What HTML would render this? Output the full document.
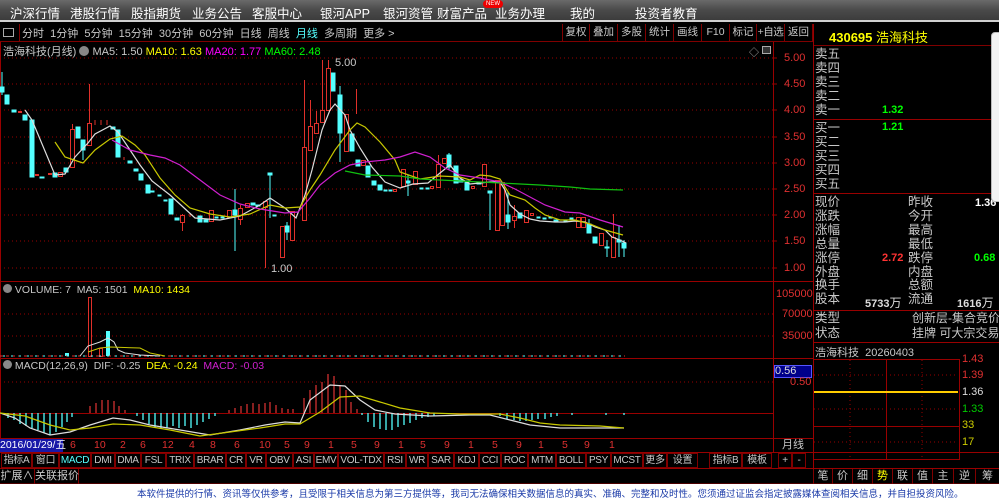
<!DOCTYPE html>
<html><head><meta charset="utf-8">
<style>
*{margin:0;padding:0;box-sizing:border-box}
body{width:999px;height:500px;overflow:hidden;background:#000;font-family:"Liberation Sans","Noto Sans CJK SC",sans-serif;position:relative;color:#c8c8c8}
.a{position:absolute;white-space:nowrap}
#nav{position:absolute;left:0;top:0;width:999px;height:22px;background:linear-gradient(#6a6a6a,#4a4a4a 50%,#3c3c3c);border-bottom:2px solid #d0d0d0}
#nav span{position:absolute;top:3px;color:#fff;font-size:12.5px}
.tb{position:absolute;top:25px;height:15px;font-size:11px;color:#c8c8c8;white-space:nowrap}
.btn{position:absolute;top:24px;height:17px;border-left:1px solid #800000;font-size:10.5px;color:#c8c8c8;text-align:center;line-height:17px;white-space:nowrap;overflow:hidden}
.rp{position:absolute;font-size:12.5px;color:#c8c8c8;line-height:14px}
.tab{position:absolute;top:453px;height:15px;border:1px solid #800000;font-size:10px;line-height:13px;text-align:center;color:#c8c8c8;white-space:nowrap;overflow:hidden;letter-spacing:-0.3px}
.bt{position:absolute;top:469px;height:15px;border-left:1px solid #800000;font-size:11px;line-height:15px;text-align:center;color:#c8c8c8;white-space:nowrap}
</style></head><body>
<div id="nav">
<span style="left:10px">沪深行情</span><span style="left:70px">港股行情</span><span style="left:131px">股指期货</span><span style="left:192px">业务公告</span><span style="left:252px">客服中心</span><span style="left:320px">银河APP</span><span style="left:383px">银河资管</span><span style="left:437px">财富产品</span><span style="left:495px">业务办理</span><span style="left:570px">我的</span><span style="left:635px">投资者教育</span>
<div class="a" style="left:483px;top:0;width:20px;height:8px;background:#e00;border-radius:4px;color:#fff;font-size:6px;line-height:8px;text-align:center">NEW</div>
</div>
<div class="a" style="left:3px;top:28px;width:11px;height:9px;border:1px solid #aaa"></div>
<div class="a" style="left:19px;top:24px;width:1px;height:17px;background:#800000"></div>
<div class="tb" style="left:22px">分时 &nbsp;1分钟 &nbsp;5分钟 &nbsp;15分钟 &nbsp;30分钟 &nbsp;60分钟 &nbsp;日线 &nbsp;周线 &nbsp;<span style="color:#5ff">月线</span> &nbsp;多周期 &nbsp;更多 &gt;</div>
<div class="btn" style="left:562px;width:27px">复权</div><div class="btn" style="left:589px;width:28px">叠加</div><div class="btn" style="left:617px;width:28px">多股</div><div class="btn" style="left:645px;width:28px">统计</div><div class="btn" style="left:673px;width:28px">画线</div><div class="btn" style="left:701px;width:28px">F10</div><div class="btn" style="left:729px;width:27px">标记</div><div class="btn" style="left:756px;width:28px;letter-spacing:-0.5px">+自选</div><div class="btn" style="left:784px;width:29px;border-right:1px solid #800000">返回</div>
<div class="a" style="left:829px;top:27px;color:#ff0;font-size:13px;font-weight:bold">430695 <span style="font-weight:normal">浩海科技</span></div>
<div class="a" style="left:0;top:41px;width:813px;height:1px;background:#800000"></div>
<div class="a" style="left:813px;top:45px;width:186px;height:1px;background:#800000"></div>
<div class="a" style="left:3px;top:43px;font-size:11px">浩海科技(月线) <span style="display:inline-block;width:10px;height:10px;border-radius:5px;background:#888;vertical-align:-1px"></span> MA5: 1.50 <span style="color:#ff0">MA10: 1.63</span> <span style="color:#f0f">MA20: 1.77</span> <span style="color:#0f0">MA60: 2.48</span></div>
<div class="a" style="left:749px;top:44px;font-size:10px;color:#aaa">◇</div><div class="a" style="left:762px;top:46px;width:9px;height:8px;border:1px solid #aaa;background:#333"></div>

<svg class="a" style="left:0;top:0" width="999" height="500">
<g stroke="#900" stroke-dasharray="1,3" stroke-width="1">
<line x1="0" y1="58" x2="773" y2="58"/><line x1="0" y1="84" x2="773" y2="84"/><line x1="0" y1="110" x2="773" y2="110"/><line x1="0" y1="137" x2="773" y2="137"/><line x1="0" y1="163" x2="773" y2="163"/><line x1="0" y1="189" x2="773" y2="189"/><line x1="0" y1="215" x2="773" y2="215"/><line x1="0" y1="241" x2="773" y2="241"/><line x1="0" y1="268" x2="773" y2="268"/>
<line x1="0" y1="314" x2="773" y2="314"/><line x1="0" y1="336" x2="773" y2="336"/><line x1="0" y1="382" x2="773" y2="382"/>
<line x1="814" y1="375" x2="958" y2="375"/><line x1="814" y1="409" x2="958" y2="409"/><line x1="814" y1="442" x2="958" y2="442"/><line x1="850" y1="360" x2="850" y2="460"/><line x1="922" y1="360" x2="922" y2="460"/>
</g>
<g stroke="#900" stroke-width="1">
<line x1="0.5" y1="42" x2="0.5" y2="452"/>
<line x1="773.5" y1="42" x2="773.5" y2="452"/><line x1="813.5" y1="24" x2="813.5" y2="468"/>
<line x1="0" y1="281.5" x2="813" y2="281.5"/><line x1="0" y1="358.5" x2="813" y2="358.5"/>
<line x1="0" y1="413.5" x2="773" y2="413.5"/>
<line x1="0" y1="438.5" x2="813" y2="438.5"/><line x1="0" y1="452.5" x2="999" y2="452.5"/>
<line x1="0" y1="468.5" x2="999" y2="468.5"/><line x1="0" y1="484" x2="999" y2="484"/>
<line x1="813" y1="119.5" x2="999" y2="119.5"/><line x1="813" y1="193.5" x2="999" y2="193.5"/><line x1="813" y1="310.5" x2="999" y2="310.5"/><line x1="813" y1="342.5" x2="999" y2="342.5"/>
<rect x="813.5" y="359.5" width="146" height="100" fill="none"/>
<line x1="886.5" y1="360" x2="886.5" y2="460"/><line x1="814" y1="426.5" x2="960" y2="426.5"/>
<line x1="773" y1="58" x2="777" y2="58"/><line x1="773" y1="84" x2="777" y2="84"/><line x1="773" y1="110" x2="777" y2="110"/><line x1="773" y1="137" x2="777" y2="137"/><line x1="773" y1="163" x2="777" y2="163"/><line x1="773" y1="189" x2="777" y2="189"/><line x1="773" y1="215" x2="777" y2="215"/><line x1="773" y1="241" x2="777" y2="241"/><line x1="773" y1="268" x2="777" y2="268"/>
</g>
<line x1="814" y1="392" x2="958" y2="392" stroke="#fc0" stroke-width="2"/>
<g fill="#54ffff" stroke="#54ffff" stroke-width="1">
<line x1="2" y1="72" x2="2" y2="95"/><rect x="0" y="87" width="4" height="5"/>
<rect x="5" y="95" width="4" height="9"/><rect x="12" y="110" width="4" height="2"/><rect x="23" y="115" width="4" height="5"/><rect x="30" y="120" width="4" height="57"/><rect x="40" y="177" width="4" height="1"/><rect x="53" y="173" width="4" height="4"/><rect x="64" y="168" width="4" height="4"/><rect x="76" y="127" width="4" height="11"/><line x1="83" y1="140" x2="83" y2="160"/><rect x="81" y="140" width="4" height="10"/>
<rect x="111" y="127" width="4" height="2"/><rect x="116" y="130" width="4" height="27"/><rect x="128" y="161" width="4" height="2"/><rect x="134" y="169" width="4" height="2"/><rect x="139" y="174" width="4" height="6"/><rect x="146" y="185" width="4" height="8"/><rect x="151" y="191" width="3" height="1"/><rect x="158" y="195" width="3" height="1"/><rect x="164" y="200" width="3" height="1"/><rect x="169" y="199" width="4" height="15"/><rect x="175" y="218" width="4" height="2"/><rect x="198" y="216" width="4" height="6"/><rect x="204" y="220" width="4" height="2"/><rect x="215" y="217" width="3" height="1"/><rect x="221" y="217" width="3" height="1"/>
<line x1="235" y1="189" x2="235" y2="251"/><rect x="233" y="210" width="4" height="5"/><rect x="251" y="203" width="4" height="2"/><rect x="256" y="205" width="4" height="1"/>
<line x1="270" y1="174" x2="270" y2="218"/><rect x="268" y="173" width="4" height="2"/><rect x="273" y="215" width="3" height="1"/><line x1="287" y1="222" x2="287" y2="240"/><rect x="285" y="226" width="4" height="6"/>
<rect x="331" y="73" width="4" height="18"/><line x1="340" y1="86" x2="340" y2="162"/><rect x="338" y="95" width="4" height="38"/><rect x="350" y="134" width="4" height="17"/><rect x="356" y="160" width="4" height="6"/><rect x="366" y="166" width="4" height="11"/><rect x="372" y="181" width="4" height="4"/><rect x="378" y="185" width="4" height="5"/><rect x="384" y="190" width="3" height="1"/><rect x="389" y="190" width="3" height="1"/>
<line x1="408" y1="175" x2="408" y2="196"/><rect x="406" y="181" width="4" height="2"/><rect x="420" y="188" width="3" height="1"/><rect x="426" y="188" width="3" height="1"/>
<line x1="449" y1="153" x2="449" y2="170"/><rect x="447" y="155" width="4" height="12"/><rect x="454" y="166" width="4" height="17"/><rect x="459" y="180" width="4" height="2"/><rect x="465" y="181" width="4" height="9"/><rect x="477" y="182" width="4" height="2"/>
<line x1="490" y1="191" x2="490" y2="230"/><rect x="488" y="191" width="4" height="2"/><line x1="508" y1="192" x2="508" y2="229"/><rect x="506" y="215" width="4" height="7"/><rect x="518" y="213" width="4" height="5"/><rect x="537" y="217" width="3" height="1"/><rect x="543" y="218" width="3" height="1"/><rect x="549" y="217" width="3" height="1"/><rect x="554" y="220" width="4" height="2"/><rect x="564" y="221" width="3" height="1"/><rect x="570" y="218" width="3" height="1"/>
<line x1="589" y1="219" x2="589" y2="233"/><rect x="587" y="224" width="4" height="9"/><rect x="593" y="237" width="4" height="6"/><line x1="607" y1="240" x2="607" y2="257"/><rect x="605" y="247" width="4" height="1"/><line x1="619" y1="225" x2="619" y2="257"/><rect x="617" y="240" width="4" height="2"/><line x1="624" y1="240" x2="624" y2="257"/><rect x="622" y="243" width="4" height="5"/>
</g>
<g fill="#000" stroke="#e0302a" stroke-width="1">
<rect x="18.5" y="111.5" width="3" height="1"/><rect x="35.5" y="174.5" width="3" height="1"/><rect x="48.5" y="173.5" width="3" height="1"/><rect x="58.5" y="172.5" width="4" height="4"/>
<line x1="72.5" y1="124" x2="72.5" y2="129"/><rect x="70.5" y="129.5" width="4" height="38"/>
<line x1="89.5" y1="84" x2="89.5" y2="123"/><rect x="87.5" y="123.5" width="4" height="22"/>
<line x1="95" y1="120" x2="95" y2="125"/><line x1="101" y1="120" x2="101" y2="125"/><line x1="107" y1="120" x2="107" y2="125"/><line x1="124" y1="157" x2="124" y2="160"/>
<line x1="182.5" y1="214" x2="182.5" y2="231"/><rect x="180.5" y="215.5" width="4" height="7"/><line x1="190" y1="214" x2="190" y2="217"/>
<rect x="209.5" y="210.5" width="4" height="11"/><rect x="227.5" y="210.5" width="4" height="7"/><line x1="240.5" y1="205" x2="240.5" y2="225"/><rect x="238.5" y="208.5" width="4" height="11"/><rect x="245.5" y="203.5" width="4" height="4"/>
<line x1="265.5" y1="201" x2="265.5" y2="268"/><rect x="263.5" y="201.5" width="4" height="6"/>
<rect x="280.5" y="226.5" width="4" height="31"/><rect x="290.5" y="211.5" width="4" height="29"/>
<line x1="304.5" y1="80" x2="304.5" y2="147"/><rect x="302.5" y="147.5" width="4" height="73"/>
<line x1="310.5" y1="100" x2="310.5" y2="126"/><rect x="308.5" y="126.5" width="4" height="24"/>
<line x1="316.5" y1="111" x2="316.5" y2="123"/><rect x="314.5" y="123.5" width="4" height="10"/>
<line x1="322.5" y1="60" x2="322.5" y2="110"/><rect x="320.5" y="110.5" width="4" height="12"/>
<line x1="328.5" y1="60" x2="328.5" y2="68"/><rect x="326.5" y="68.5" width="4" height="42"/>
<line x1="356.5" y1="89" x2="356.5" y2="114"/><rect x="344.5" y="114.5" width="4" height="37"/>
<rect x="361.5" y="160.5" width="4" height="5"/><rect x="393.5" y="189.5" width="3" height="2"/>
<rect x="401.5" y="169.5" width="4" height="17"/><rect x="413.5" y="171.5" width="4" height="13"/><rect x="430.5" y="186.5" width="3" height="2"/>
<line x1="438.5" y1="155" x2="438.5" y2="164"/><rect x="436.5" y="164.5" width="4" height="23"/><rect x="442.5" y="158.5" width="4" height="5"/><rect x="471.5" y="186.5" width="3" height="2"/>
<rect x="482.5" y="164.5" width="4" height="22"/><rect x="495.5" y="180.5" width="4" height="50"/><line x1="502.5" y1="194" x2="502.5" y2="225"/><rect x="500.5" y="182.5" width="4" height="43"/>
<line x1="514.5" y1="205" x2="514.5" y2="228"/><rect x="512.5" y="216.5" width="4" height="4"/><rect x="524.5" y="210.5" width="4" height="12"/><rect x="530.5" y="213.5" width="3" height="2"/>
<rect x="576.5" y="217.5" width="4" height="10"/><rect x="581.5" y="217.5" width="4" height="10"/><rect x="599.5" y="233.5" width="4" height="12"/>
<line x1="613.5" y1="214" x2="613.5" y2="237"/><rect x="611.5" y="237.5" width="4" height="20"/>
</g>
<g fill="none" stroke-width="1.2">
<polyline stroke="#ddd" points="25,110 32,120 55,175 65,174 75,157 88,143 95,134 110,126 118,132 130,150 140,165 152,181 170,195 195,218 220,220 240,216 260,205 270,198 285,208 296,218 305,195 312,170 322,130 330,110 335,104 345,115 350,130 360,148 372,167 385,182 400,188 413,184 428,183 440,173 450,165 460,178 470,184 480,183 490,182 500,182 505,190 510,205 520,214 530,219 540,221 555,222 565,222 575,221 585,222 595,227 605,230 612,237 620,240 626,243"/>
<polyline stroke="#c8c800" points="55,142 65,157 83,163 95,150 110,139 122,136 135,145 145,155 160,178 175,195 190,208 210,214 230,217 250,214 270,205 285,208 300,207 310,190 320,175 335,150 350,130 357,123 365,127 380,142 395,160 400,172 420,179 440,176 460,177 470,180 480,175 490,176 500,179 510,195 525,200 535,208 545,215 560,220 575,220 590,224 605,230 623,235"/>
<polyline stroke="#d020d0" points="112,140 130,150 150,155 165,158 180,165 200,180 220,195 240,204 260,209 285,213 298,212 310,198 320,185 335,173 350,165 365,162 385,160 400,157 415,152 430,157 445,168 460,175 480,178 500,182 515,189 530,197 545,205 565,212 580,213 600,220 623,227"/>
<polyline stroke="#10c010" points="345,171 365,175 400,176 420,179 460,181 500,183 540,185 570,187 590,189 623,190"/>
</g>
<text x="335" y="66" fill="#c8c8c8" font-size="11" font-family="Liberation Sans">5.00</text><text x="271" y="272" fill="#c8c8c8" font-size="11" font-family="Liberation Sans">1.00</text>
<g stroke-width="1" fill="none">
<rect x="88.5" y="297.5" width="3" height="59" stroke="#e0302a"/><rect x="99.5" y="348.5" width="3" height="8" stroke="#e0302a"/>
<rect x="106" y="331" width="4" height="25" fill="#54ffff"/><rect x="65" y="353" width="4" height="3" fill="#54ffff"/>
<line x1="0" y1="356" x2="625" y2="356" stroke="#e0302a" stroke-dasharray="3,3"/><line x1="3" y1="356" x2="625" y2="356" stroke="#54ffff" stroke-dasharray="2,6"/>
<polyline stroke="#ddd" points="80,356 88,346 100,342 108,338 114,342 118,350 125,353 140,355 160,356"/>
<polyline stroke="#c8c800" points="88,352 100,348 110,347 140,348 150,353 165,356"/>
</g>
<g stroke="#54ffff" stroke-width="1.3">
<line x1="8" y1="413" x2="8" y2="418"/><line x1="14" y1="413" x2="14" y2="420"/><line x1="20" y1="413" x2="20" y2="424"/><line x1="26" y1="413" x2="26" y2="426"/><line x1="32" y1="413" x2="32" y2="428"/><line x1="38" y1="413" x2="38" y2="430"/><line x1="44" y1="413" x2="44" y2="433"/><line x1="50" y1="413" x2="50" y2="435"/><line x1="56" y1="413" x2="56" y2="432"/><line x1="62" y1="413" x2="62" y2="427"/><line x1="67" y1="413" x2="67" y2="422"/><line x1="72" y1="413" x2="72" y2="417"/>
<line x1="137" y1="413" x2="137" y2="416"/><line x1="143" y1="413" x2="143" y2="420"/><line x1="149" y1="413" x2="149" y2="424"/><line x1="155" y1="413" x2="155" y2="428"/><line x1="161" y1="413" x2="161" y2="428"/><line x1="167" y1="413" x2="167" y2="428"/><line x1="173" y1="413" x2="173" y2="426"/><line x1="179" y1="413" x2="179" y2="428"/><line x1="185" y1="413" x2="185" y2="426"/><line x1="191" y1="413" x2="191" y2="428"/><line x1="197" y1="413" x2="197" y2="425"/><line x1="203" y1="413" x2="203" y2="422"/><line x1="209" y1="413" x2="209" y2="419"/><line x1="215" y1="413" x2="215" y2="416"/>
<line x1="362" y1="413" x2="362" y2="415"/><line x1="368" y1="413" x2="368" y2="422"/><line x1="374" y1="413" x2="374" y2="427"/><line x1="380" y1="413" x2="380" y2="429"/><line x1="386" y1="413" x2="386" y2="430"/><line x1="392" y1="413" x2="392" y2="430"/><line x1="398" y1="413" x2="398" y2="427"/><line x1="404" y1="413" x2="404" y2="425"/><line x1="410" y1="413" x2="410" y2="423"/><line x1="416" y1="413" x2="416" y2="420"/><line x1="422" y1="413" x2="422" y2="418"/><line x1="428" y1="413" x2="428" y2="417"/><line x1="434" y1="413" x2="434" y2="416"/>
<line x1="500" y1="413" x2="500" y2="416"/><line x1="507" y1="413" x2="507" y2="419"/><line x1="514" y1="413" x2="514" y2="420"/><line x1="520" y1="413" x2="520" y2="421"/><line x1="526" y1="413" x2="526" y2="421"/><line x1="532" y1="413" x2="532" y2="420"/><line x1="538" y1="413" x2="538" y2="419"/><line x1="545" y1="413" x2="545" y2="419"/><line x1="551" y1="413" x2="551" y2="417"/><line x1="557" y1="413" x2="557" y2="416"/><line x1="572" y1="413" x2="572" y2="415"/><line x1="606" y1="413" x2="606" y2="415"/><line x1="624" y1="413" x2="624" y2="415"/>
</g>
<g stroke="#d03030" stroke-width="1.3">
<line x1="90" y1="413" x2="90" y2="406"/><line x1="96" y1="413" x2="96" y2="403"/><line x1="102" y1="413" x2="102" y2="400"/><line x1="108" y1="413" x2="108" y2="400"/><line x1="114" y1="413" x2="114" y2="401"/><line x1="119" y1="413" x2="119" y2="406"/><line x1="125" y1="413" x2="125" y2="410"/>
<line x1="229" y1="413" x2="229" y2="410"/><line x1="235" y1="413" x2="235" y2="408"/><line x1="241" y1="413" x2="241" y2="406"/><line x1="247" y1="413" x2="247" y2="404"/><line x1="253" y1="413" x2="253" y2="403"/><line x1="259" y1="413" x2="259" y2="404"/><line x1="265" y1="413" x2="265" y2="403"/><line x1="270" y1="413" x2="270" y2="402"/><line x1="276" y1="413" x2="276" y2="405"/><line x1="282" y1="413" x2="282" y2="408"/><line x1="288" y1="413" x2="288" y2="409"/><line x1="293" y1="413" x2="293" y2="409"/>
<line x1="304" y1="413" x2="304" y2="398"/><line x1="310" y1="413" x2="310" y2="390"/><line x1="316" y1="413" x2="316" y2="385"/><line x1="322" y1="413" x2="322" y2="382"/><line x1="328" y1="413" x2="328" y2="374"/><line x1="334" y1="413" x2="334" y2="376"/><line x1="340" y1="413" x2="340" y2="385"/><line x1="346" y1="413" x2="346" y2="390"/><line x1="351" y1="413" x2="351" y2="402"/><line x1="357" y1="413" x2="357" y2="409"/>
</g>
<g fill="none" stroke-width="1.2">
<polyline stroke="#ddd" points="0,413 15,418 30,428 50,435 70,432 90,425 113,418 130,420 150,425 180,430 210,435 240,430 265,425 285,422 300,423 310,400 330,385 345,386 360,400 375,410 395,414 430,416 470,415 490,415 510,420 530,425 560,428 600,428 624,428"/>
<polyline stroke="#c8c800" points="0,413 25,416 50,425 70,430 90,428 113,424 140,425 170,430 200,436 230,432 260,428 285,424 300,424 320,412 340,397 360,396 380,402 400,408 430,413 460,414 500,414 520,418 540,423 560,425 600,426 624,428"/>
</g>
</svg>

<div class="a" style="left:784px;top:52px;font-size:11px;color:#e03030">5.00</div>
<div class="a" style="left:784px;top:78px;font-size:11px;color:#e03030">4.50</div>
<div class="a" style="left:784px;top:104px;font-size:11px;color:#e03030">4.00</div>
<div class="a" style="left:784px;top:131px;font-size:11px;color:#e03030">3.50</div>
<div class="a" style="left:784px;top:157px;font-size:11px;color:#e03030">3.00</div>
<div class="a" style="left:784px;top:183px;font-size:11px;color:#e03030">2.50</div>
<div class="a" style="left:784px;top:209px;font-size:11px;color:#e03030">2.00</div>
<div class="a" style="left:784px;top:235px;font-size:11px;color:#e03030">1.50</div>
<div class="a" style="left:784px;top:262px;font-size:11px;color:#e03030">1.00</div>
<div class="a" style="left:776px;top:288px;font-size:11px;color:#e03030">105000</div>
<div class="a" style="left:782px;top:308px;font-size:11px;color:#e03030">70000</div>
<div class="a" style="left:782px;top:330px;font-size:11px;color:#e03030">35000</div>
<div class="a" style="left:774px;top:365px;width:38px;height:13px;background:#00008a;border:1px solid #55f;color:#ddd;font-size:11px;line-height:11px">0.56</div>
<div class="a" style="left:790px;top:376px;font-size:11px;color:#e03030">0.50</div>

<div class="a" style="left:3px;top:284px;font-size:10.5px"><span style="display:inline-block;width:9px;height:9px;border-radius:5px;background:#888"></span> VOLUME: 7 &nbsp;MA5: 1501 &nbsp;<span style="color:#ff0">MA10: 1434</span></div>
<div class="a" style="left:3px;top:360px;font-size:10.5px"><span style="display:inline-block;width:9px;height:9px;border-radius:5px;background:#888"></span> MACD(12,26,9) &nbsp;DIF: -0.25 &nbsp;<span style="color:#ff0">DEA: -0.24</span> &nbsp;<span style="color:#d020d0">MACD: -0.03</span></div>

<div class="a" style="left:0;top:439px;width:63px;height:13px;background:#1818a8;color:#fff;font-size:10.5px;line-height:13px">2016/01/29/五</div>
<div class="a" style="left:70px;top:439px;font-size:10.5px;color:#e03030;line-height:13px">
<span style="position:absolute;left:0">6</span><span style="position:absolute;left:24px">10</span><span style="position:absolute;left:50px">2</span><span style="position:absolute;left:70px">6</span><span style="position:absolute;left:92px">12</span><span style="position:absolute;left:119px">4</span><span style="position:absolute;left:140px">8</span><span style="position:absolute;left:164px">6</span><span style="position:absolute;left:189px">10</span><span style="position:absolute;left:214px">5</span><span style="position:absolute;left:234px">9</span><span style="position:absolute;left:258px">1</span><span style="position:absolute;left:281px">5</span><span style="position:absolute;left:304px">9</span><span style="position:absolute;left:328px">1</span><span style="position:absolute;left:350px">5</span><span style="position:absolute;left:374px">9</span><span style="position:absolute;left:398px">1</span><span style="position:absolute;left:422px">5</span><span style="position:absolute;left:446px">9</span><span style="position:absolute;left:468px">1</span><span style="position:absolute;left:492px">5</span><span style="position:absolute;left:514px">9</span><span style="position:absolute;left:539px">1</span></div>
<div class="a" style="left:782px;top:439px;font-size:11px;line-height:13px">月线</div>

<div class="tab" style="left:1px;width:31px">指标A</div><div class="tab" style="left:32px;width:27px">窗口</div><div class="tab" style="left:59px;width:32px;color:#5ff">MACD</div><div class="tab" style="left:91px;width:24px">DMI</div><div class="tab" style="left:115px;width:26px">DMA</div><div class="tab" style="left:141px;width:25px">FSL</div><div class="tab" style="left:166px;width:28px">TRIX</div><div class="tab" style="left:194px;width:32px">BRAR</div><div class="tab" style="left:226px;width:20px">CR</div><div class="tab" style="left:246px;width:20px">VR</div><div class="tab" style="left:266px;width:27px">OBV</div><div class="tab" style="left:293px;width:21px">ASI</div><div class="tab" style="left:314px;width:24px">EMV</div><div class="tab" style="left:338px;width:46px">VOL-TDX</div><div class="tab" style="left:384px;width:22px">RSI</div><div class="tab" style="left:406px;width:22px">WR</div><div class="tab" style="left:428px;width:26px">SAR</div><div class="tab" style="left:454px;width:25px">KDJ</div><div class="tab" style="left:479px;width:22px">CCI</div><div class="tab" style="left:501px;width:27px">ROC</div><div class="tab" style="left:528px;width:28px">MTM</div><div class="tab" style="left:556px;width:30px">BOLL</div><div class="tab" style="left:586px;width:25px">PSY</div><div class="tab" style="left:611px;width:32px">MCST</div><div class="tab" style="left:643px;width:24px">更多</div><div class="tab" style="left:667px;width:31px">设置</div><div class="tab" style="left:709px;width:33px">指标B</div><div class="tab" style="left:742px;width:30px">模板</div><div class="tab" style="left:778px;width:14px">+</div><div class="tab" style="left:792px;width:14px">-</div>
<div class="bt" style="left:0;width:34px;border-left:none">扩展∧</div><div class="bt" style="left:34px;width:45px;border-right:1px solid #800000">关联报价</div>
<div class="bt" style="left:813px;width:19px">笔</div><div class="bt" style="left:832px;width:20px">价</div><div class="bt" style="left:852px;width:20px">细</div><div class="bt" style="left:872px;width:20px;color:#ff0">势</div><div class="bt" style="left:892px;width:20px">联</div><div class="bt" style="left:912px;width:20px">值</div><div class="bt" style="left:932px;width:21px">主</div><div class="bt" style="left:953px;width:22px">逆</div><div class="bt" style="left:975px;width:24px">筹</div>

<div class="rp" style="left:815px;top:47px">卖五<br>卖四<br>卖三<br>卖二<br>卖一</div>
<div class="a" style="left:882px;top:104px;font-size:11px;color:#0f0;font-weight:bold">1.32</div>
<div class="rp" style="left:815px;top:121px">买一<br>买二<br>买三<br>买四<br>买五</div>
<div class="a" style="left:882px;top:121px;font-size:11px;color:#0f0;font-weight:bold">1.21</div>
<div class="rp" style="left:815px;top:196px;line-height:13.9px">现价<br>涨跌<br>涨幅<br>总量<br>涨停<br>外盘<br>换手<br>股本</div>
<div class="rp" style="left:908px;top:196px;line-height:13.9px">昨收<br>今开<br>最高<br>最低<br>跌停<br>内盘<br>总额<br>流通</div>
<div class="a" style="left:975px;top:197px;font-size:11px;color:#fff;font-weight:bold">1.36</div>
<div class="a" style="left:882px;top:252px;font-size:11px;color:#f33;font-weight:bold">2.72</div>
<div class="a" style="left:974px;top:252px;font-size:11px;color:#0f0;font-weight:bold">0.68</div>
<div class="a" style="left:865px;top:294px;font-size:11px;color:#ddd;font-weight:bold">5733<span style="font-weight:normal;font-size:12px">万</span></div>
<div class="a" style="left:957px;top:294px;font-size:11px;color:#ddd;font-weight:bold">1616<span style="font-weight:normal;font-size:12px">万</span></div>
<div class="rp" style="left:815px;top:311px;line-height:15px">类型<br>状态</div>
<div class="a" style="left:912px;top:311px;font-size:12px;line-height:15px;color:#c8c8c8;text-align:right;width:85px">创新层-集合竞价<br>挂牌 可大宗交易</div>
<div class="a" style="left:815px;top:344px;font-size:11px">浩海科技 &nbsp;20260403</div>
<div class="a" style="left:962px;top:353px;font-size:11px;color:#e03030">1.43</div>
<div class="a" style="left:962px;top:369px;font-size:11px;color:#e03030">1.39</div>
<div class="a" style="left:962px;top:386px;font-size:11px;color:#ddd">1.36</div>
<div class="a" style="left:962px;top:403px;font-size:11px;color:#0c0">1.33</div>
<div class="a" style="left:962px;top:419px;font-size:11px;color:#cc0">33</div>
<div class="a" style="left:962px;top:436px;font-size:11px;color:#cc0">17</div>

<div class="a" style="left:991px;top:32px;width:10px;height:170px;background:#f2f2f2;border-radius:4px 0 0 4px;border:1px solid #bbb"></div>

<div class="a" style="left:0;top:484px;width:999px;height:16px;background:#fff"></div>
<div class="a" style="left:137px;top:486px;font-size:9.5px;color:#1a3aa8">本软件提供的行情、资讯等仅供参考，且受限于相关信息为第三方提供等，我司无法确保相关数据信息的真实、准确、完整和及时性。您须通过证监会指定披露媒体查阅相关信息，并自担投资风险。</div>
</body></html>
